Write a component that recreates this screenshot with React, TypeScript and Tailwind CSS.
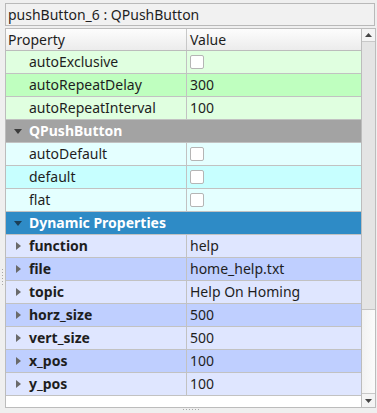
import React from "react";

type Row =
  | { kind: "prop"; name: string; value?: string; check?: boolean; bg: string; bold?: boolean; arrow?: boolean }
  | { kind: "cat"; name: string; bg: string; arrowColor: string };

const rows: Row[] = [
  { kind: "prop", name: "autoExclusive", check: true, bg: "bg-[#e0ffe0]" },
  { kind: "prop", name: "autoRepeatDelay", value: "300", bg: "bg-[#bfffbf]" },
  { kind: "prop", name: "autoRepeatInterval", value: "100", bg: "bg-[#e0ffe0]" },
  { kind: "cat", name: "QPushButton", bg: "bg-[#a3a3a3]", arrowColor: "#3c3c3c" },
  { kind: "prop", name: "autoDefault", check: true, bg: "bg-[#e4ffff]" },
  { kind: "prop", name: "default", check: true, bg: "bg-[#c7ffff]" },
  { kind: "prop", name: "flat", check: true, bg: "bg-[#e4ffff]" },
  { kind: "cat", name: "Dynamic Properties", bg: "bg-[#2e8bc6]", arrowColor: "#1b3f57" },
  { kind: "prop", name: "function", value: "help", bg: "bg-[#dfe6ff]", bold: true, arrow: true },
  { kind: "prop", name: "file", value: "home_help.txt", bg: "bg-[#bfcfff]", bold: true, arrow: true },
  { kind: "prop", name: "topic", value: "Help On Homing", bg: "bg-[#dfe6ff]", bold: true, arrow: true },
  { kind: "prop", name: "horz_size", value: "500", bg: "bg-[#bfcfff]", bold: true, arrow: true },
  { kind: "prop", name: "vert_size", value: "500", bg: "bg-[#dfe6ff]", bold: true, arrow: true },
  { kind: "prop", name: "x_pos", value: "100", bg: "bg-[#bfcfff]", bold: true, arrow: true },
  { kind: "prop", name: "y_pos", value: "100", bg: "bg-[#dfe6ff]", bold: true, arrow: true },
];

function DownArrow({ color }: { color: string }) {
  return (
    <svg width="8" height="5" viewBox="0 0 8 5">
      <path d="M0 0 L8 0 L4 5 Z" fill={color} />
    </svg>
  );
}

function RightArrow() {
  return (
    <svg width="5" height="8" viewBox="0 0 5 8">
      <path d="M0 0 L5 4 L0 8 Z" fill="#6a6a6a" />
    </svg>
  );
}

export default function App() {
  return (
    <div className="w-[377px] h-[413px] bg-[#efefef] flex flex-col font-['Noto_Sans',sans-serif] text-[14px] leading-none text-[#1e1e1e] overflow-hidden">
      <div className="mt-[3px] ml-[5px] mr-[2px] h-[23px] border border-[#b9b9b9] bg-[#f1f1f1] flex items-center pl-[2px]">
        pushButton_6 : QPushButton
      </div>
      <div className="flex mt-[2px]">
        <div className="w-[5px] flex flex-col items-center pt-[241px] gap-[2px]">
          {[0, 1, 2, 3, 4, 5].map((i) => (
            <div key={i} className="w-[1px] h-[1px] bg-[#a8a8a8]" />
          ))}
        </div>
        <div className="w-[371px] h-[380px] border border-[#bcbcbc] bg-white flex">
          <div className="flex-1 flex flex-col">
            <div className="h-[22px] flex border-b border-[#bcbcbc] bg-gradient-to-b from-[#fdfdfd] to-[#ececec]">
              <div className="w-[181px] border-r border-[#c8c8c8] flex items-center pl-[2px]">Property</div>
              <div className="flex-1 flex items-center pl-[3px]">Value</div>
            </div>
            {rows.map((r, i) =>
              r.kind === "cat" ? (
                <div key={i} className={`h-[23px] flex items-center border-b border-[#c2c2c2] ${r.bg}`}>
                  <div className="w-[23px] flex justify-center pl-[1px]">
                    <DownArrow color={r.arrowColor} />
                  </div>
                  <span className="font-bold text-white">{r.name}</span>
                </div>
              ) : (
                <div key={i} className={`h-[23px] flex border-b border-[#c2c2c2] ${r.bg}`}>
                  <div className="w-[181px] border-r border-[#c2c2c2] flex items-center">
                    <div className="w-[23px] flex justify-center pl-[2px]">{r.arrow ? <RightArrow /> : null}</div>
                    <span className={r.bold ? "font-bold" : ""}>{r.name}</span>
                  </div>
                  <div className="flex-1 flex items-center pl-[3px]">
                    {r.check ? (
                      <div className="w-[14px] h-[14px] bg-white border border-[#b5b5b5] rounded-[2px]" />
                    ) : (
                      r.value
                    )}
                  </div>
                </div>
              )
            )}
          </div>
          <div className="w-[14px] border-l border-[#bcbcbc] flex flex-col bg-[#f6f6f6]">
            <div className="h-[13px] flex items-center justify-center bg-[#f4f4f4] border-b border-[#c8c8c8]">
              <svg width="7" height="4" viewBox="0 0 7 4">
                <path d="M0 4 L7 4 L3.5 0 Z" fill="#444" />
              </svg>
            </div>
            <div className="h-[268px] bg-[#e4e4e4] border-b border-[#c4c4c4]" />
            <div className="flex-1 bg-gradient-to-r from-[#f2f2f2] to-[#fbfbfb]" />
            <div className="h-[14px] flex items-center justify-center bg-[#f4f4f4] border-t border-[#c8c8c8]">
              <svg width="7" height="4" viewBox="0 0 7 4">
                <path d="M0 0 L7 0 L3.5 4 Z" fill="#444" />
              </svg>
            </div>
          </div>
        </div>
      </div>
      <div className="flex justify-center gap-[2px] mt-[1px] pl-[5px]">
        {[0, 1, 2, 3, 4, 5].map((i) => (
          <div key={i} className="w-[1px] h-[1px] bg-[#a8a8a8]" />
        ))}
      </div>
    </div>
  );
}
